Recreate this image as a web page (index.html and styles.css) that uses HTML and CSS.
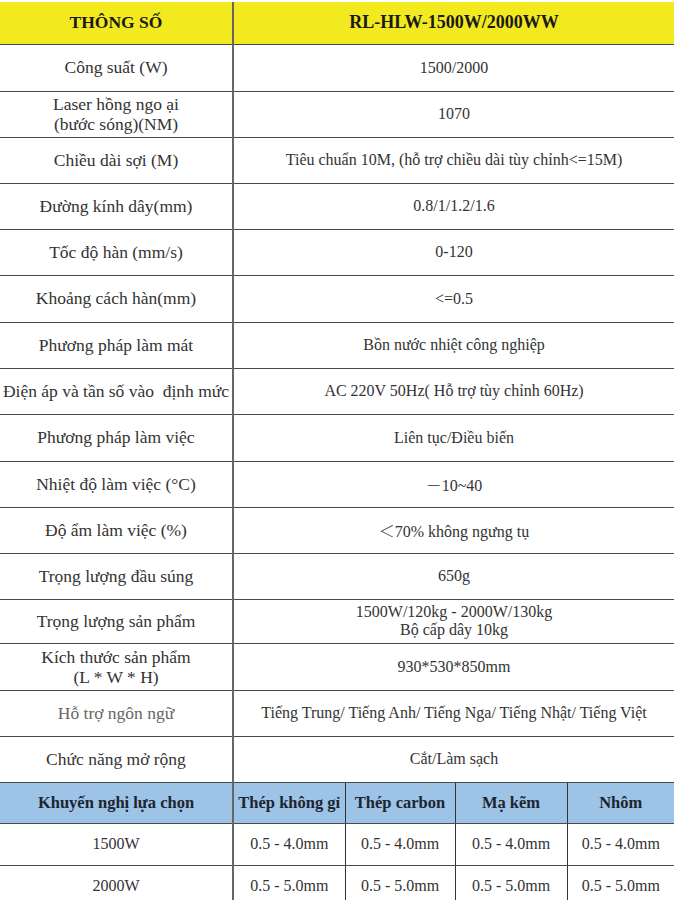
FILE: index.html
```html
<!DOCTYPE html>
<html lang="vi">
<head>
<meta charset="utf-8">
<title>Thông số</title>
<link rel="stylesheet" href="styles.css">
</head>
<body>
<table class="spec">
  <colgroup>
    <col class="c1"><col class="c2"><col class="c3"><col class="c4"><col class="c5">
  </colgroup>
  <tr class="head-yellow">
    <th>THÔNG SỐ</th>
    <th colspan="4">RL-HLW-1500W/2000WW</th>
  </tr>
  <tr class="tall"><td class="k">Công suất (W)</td><td class="v" colspan="4">1500/2000</td></tr>
  <tr><td class="k two">Laser hồng ngo ại<br>(bước sóng)(NM)</td><td class="v" colspan="4">1070</td></tr>
  <tr><td class="k">Chiều dài sợi (M)</td><td class="v" colspan="4">Tiêu chuẩn 10M, (hỗ trợ chiều dài tùy chỉnh&lt;=15M)</td></tr>
  <tr><td class="k">Đường kính dây(mm)</td><td class="v" colspan="4">0.8/1/1.2/1.6</td></tr>
  <tr><td class="k">Tốc độ hàn (mm/s)</td><td class="v" colspan="4">0-120</td></tr>
  <tr class="tall"><td class="k">Khoảng cách hàn(mm)</td><td class="v" colspan="4">&lt;=0.5</td></tr>
  <tr><td class="k">Phương pháp làm mát</td><td class="v" colspan="4">Bồn nước nhiệt công nghiệp</td></tr>
  <tr><td class="k">Điện áp và tần số vào&nbsp; định mức</td><td class="v" colspan="4">AC 220V 50Hz( Hỗ trợ tùy chỉnh 60Hz)</td></tr>
  <tr class="tall"><td class="k">Phương pháp làm việc</td><td class="v" colspan="4">Liên tục/Điều biến</td></tr>
  <tr><td class="k">Nhiệt độ làm việc (°C)</td><td class="v" colspan="4"><span class="cjk">－</span>10~40</td></tr>
  <tr><td class="k">Độ ẩm làm việc (%)</td><td class="v" colspan="4"><span class="cjk">＜</span>70% không ngưng tụ</td></tr>
  <tr><td class="k">Trọng lượng đầu súng</td><td class="v" colspan="4">650g</td></tr>
  <tr class="short"><td class="k">Trọng lượng sản phẩm</td><td class="v two" colspan="4">1500W/120kg - 2000W/130kg<br>Bộ cấp dây 10kg</td></tr>
  <tr class="tall"><td class="k two">Kích thước sản phẩm<br>(L * W * H)</td><td class="v" colspan="4">930*530*850mm</td></tr>
  <tr><td class="k muted">Hỗ trợ ngôn ngữ</td><td class="v" colspan="4">Tiếng Trung/ Tiếng Anh/ Tiếng Nga/ Tiếng Nhật/ Tiếng Việt</td></tr>
  <tr><td class="k">Chức năng mở rộng</td><td class="v" colspan="4">Cắt/Làm sạch</td></tr>
  <tr class="head-blue">
    <th>Khuyến nghị lựa chọn</th>
    <th>Thép không gỉ</th>
    <th>Thép carbon</th>
    <th>Mạ kẽm</th>
    <th>Nhôm</th>
  </tr>
  <tr class="rec"><td class="k">1500W</td><td class="m">0.5 - 4.0mm</td><td class="m">0.5 - 4.0mm</td><td class="m">0.5 - 4.0mm</td><td class="m">0.5 - 4.0mm</td></tr>
  <tr class="rec"><td class="k">2000W</td><td class="m">0.5 - 5.0mm</td><td class="m">0.5 - 5.0mm</td><td class="m">0.5 - 5.0mm</td><td class="m">0.5 - 5.0mm</td></tr>
</table>
</body>
</html>
```
FILE: styles.css
```css
html, body {
  margin: 0;
  padding: 0;
  background: #ffffff;
}

body {
  padding-top: 2px;
  font-family: "Liberation Serif", "Times New Roman", serif;
  color: #333333;
}

.spec {
  width: 674px;
  border-collapse: collapse;
  table-layout: fixed;
}

.c1 { width: 233px; }
.c2 { width: 112px; }
.c3 { width: 110px; }
.c4 { width: 112px; }
.c5 { width: 107px; }

.spec tr {
  height: 46px;
}

.spec tr.tall {
  height: 47px;
}

.spec tr.short {
  height: 44px;
}

.spec td,
.spec th {
  padding: 0;
  font-family: "Liberation Serif", "Times New Roman", serif;
  text-align: center;
  vertical-align: middle;
  border-bottom: 1px solid #4a4a4a;
  border-right: 2px solid #666666;
  white-space: nowrap;
}

.spec td:last-child,
.spec th:last-child {
  border-right: none;
}

.cjk {
  font-family: "Noto Sans CJK SC", "Liberation Serif", sans-serif;
  font-weight: 300;
}

.head-yellow {
  background: #f3e91f;
}

.spec tr.head-yellow {
  height: 42px;
}

.head-yellow th {
  font-size: 17.5px;
  font-weight: bold;
  color: #1a1a1a;
}

.head-yellow th:last-child {
  font-size: 18px;
}

.k {
  font-size: 17.5px;
  color: #333333;
}

.v {
  font-size: 16px;
  color: #333333;
}

.k.two {
  line-height: 20px;
}

.v.two {
  line-height: 18px;
}

.muted {
  color: #666666;
}

.head-blue {
  background: #9dc3e6;
}

.spec tr.head-blue {
  height: 41px;
}

.head-blue th {
  font-size: 16.5px;
  font-weight: bold;
  color: #1c2530;
  border-right-width: 1px;
  border-right-color: #333333;
}

.head-blue th:first-child {
  border-right: 2px solid #666666;
}

.spec tr.rec {
  height: 42px;
}

.rec td {
  border-right-width: 1px;
  border-right-color: #333333;
}

.rec td.k {
  font-size: 16px;
  border-right: 2px solid #666666;
}

.m {
  font-size: 16px;
  color: #333333;
}
```
